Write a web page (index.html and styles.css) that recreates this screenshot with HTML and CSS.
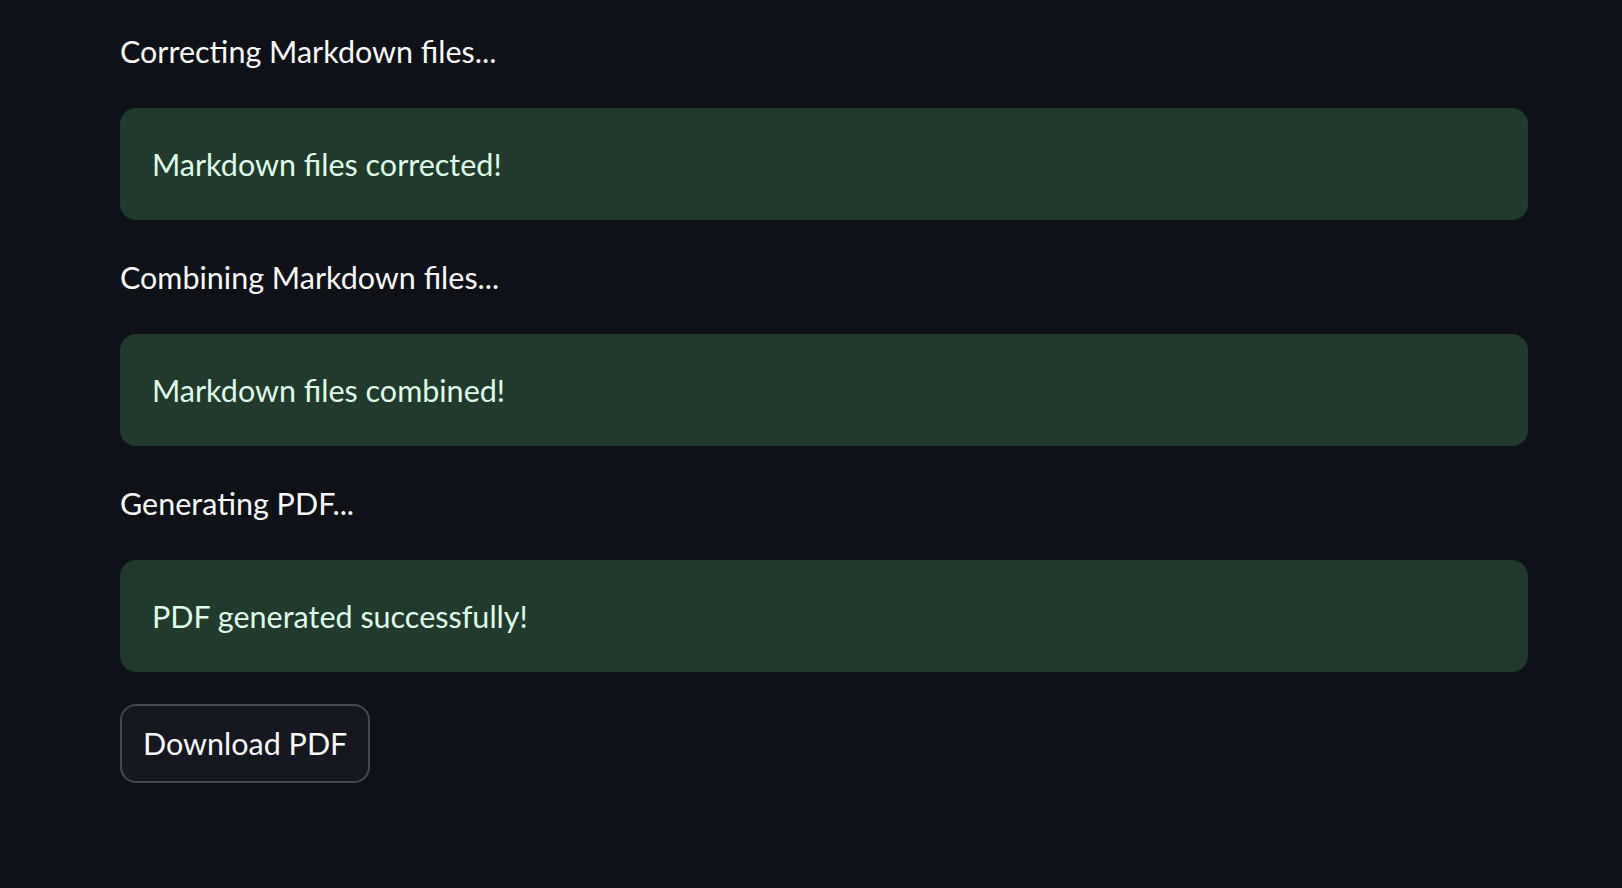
FILE: index.html
```html
<!DOCTYPE html>
<html lang="en">
<head>
<meta charset="utf-8">
<title>PDF generator</title>
<link rel="stylesheet" href="styles.css">
</head>
<body>
<main class="main">
  <p class="status">Correcting Markdown files...</p>
  <div class="alert alert-success">Markdown files corrected!</div>
  <p class="status">Combining Markdown files...</p>
  <div class="alert alert-success">Markdown files combined!</div>
  <p class="status">Generating PDF...</p>
  <div class="alert alert-success">PDF generated successfully!</div>
  <div class="actions">
    <button class="btn" type="button">Download PDF</button>
  </div>
</main>
</body>
</html>
```

FILE: styles.css
```css
html, body {
  margin: 0;
  padding: 0;
  background: #0e1117;
  height: 100%;
}
body {
  font-family: "Lato", "Liberation Sans", sans-serif;
  font-size: 30.5px;
  color: #fafafa;
  overflow: hidden;
}
.main {
  width: 1408px;
  padding: 26px 0 0 120px;
  display: flex;
  flex-direction: column;
  gap: 32px;
}
.status {
  margin: 0;
  line-height: 50px;
  height: 50px;
}
.alert {
  border-radius: 16px;
  padding: 30px 32px;
  line-height: 52px;
  height: 52px;
}
.alert-success {
  background: #223a2b;
  color: #dffde9;
}
.actions {
  display: flex;
}
.btn {
  font-family: inherit;
  font-size: 30.5px;
  color: #fafafa;
  background: #151821;
  border: 2px solid #46484f;
  border-radius: 16px;
  height: 79px;
  padding: 0 21px;
  line-height: 1;
}
```
